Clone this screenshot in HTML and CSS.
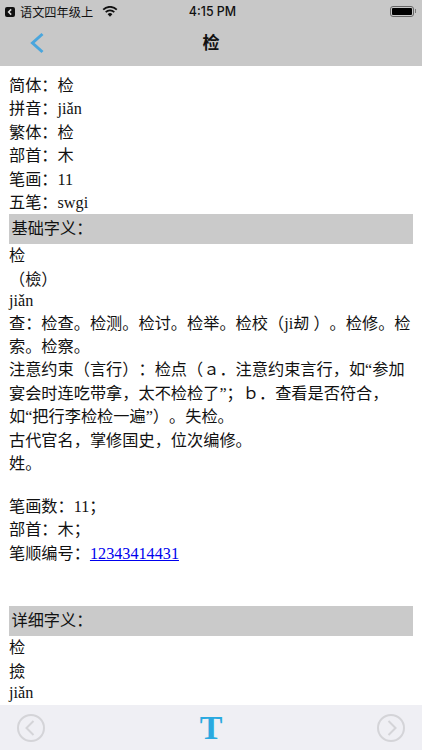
FILE: index.html
```html
<!DOCTYPE html>
<html lang="zh">
<head>
<meta charset="utf-8">
<title>检</title>
<link rel="stylesheet" href="styles.css">
</head>
<body>
<div class="app">
  <header class="top">
    <div class="status">
      <div class="status-left">
        <svg class="back-badge" viewBox="0 0 10 10"><rect width="10" height="10" rx="2" fill="#111"/><path d="M6.2 2.4 3.6 5l2.6 2.6" fill="none" stroke="#ddd" stroke-width="1.5"/></svg>
        <span>语文四年级上</span>
        <svg class="wifi" viewBox="0 0 16 11"><path d="M8 10.8 5.6 8.2a3.4 3.4 0 0 1 4.8 0z" fill="#111"/><path d="M3.7 6.2a6 6 0 0 1 8.6 0M1.2 3.6a9.6 9.6 0 0 1 13.6 0" fill="none" stroke="#111" stroke-width="1.7"/></svg>
      </div>
      <div class="status-time">4:15 PM</div>
      <div class="status-right">
        <span class="battery"><span class="battery-fill"></span></span><span class="battery-cap"></span>
      </div>
    </div>
    <nav class="nav">
      <svg class="nav-back" viewBox="0 0 16 22"><path d="M13.5 2 3.5 11l10 9" fill="none" stroke="#4aa6dd" stroke-width="3"/></svg>
      <h1>检</h1>
    </nav>
  </header>
  <main class="content">
    <div class="line">简体：检</div>
    <div class="line">拼音：jiǎn</div>
    <div class="line">繁体：检</div>
    <div class="line">部首：木</div>
    <div class="line">笔画：11</div>
    <div class="line">五笔：swgi</div>
    <div class="section">基础字义：</div>
    <div class="line">检</div>
    <div class="line">（檢）</div>
    <div class="latin">jiǎn</div>
    <div class="line">查：检查。检测。检讨。检举。检校（ji刼 ）。检修。检索。检察。</div>
    <div class="line">注意约束（言行）：检点（ａ．注意约束言行，如“参加宴会时连吃带拿，太不检检了”；ｂ．查看是否符合，<br>如“把行李检检一遍”）。失检。</div>
    <div class="line">古代官名，掌修国史，位次编修。</div>
    <div class="line">姓。</div>
    <div class="spacer"></div>
    <div class="line">笔画数：11；</div>
    <div class="line">部首：木；</div>
    <div class="line">笔顺编号：<a href="#">12343414431</a></div>
    <div class="spacer double"></div>
    <div class="section">详细字义：</div>
    <div class="line">检</div>
    <div class="line">撿</div>
    <div class="latin">jiǎn</div>
  </main>
  <footer class="bottom">
    <svg class="round" viewBox="0 0 28 28"><circle cx="14" cy="14" r="13" fill="none" stroke="#d4d4d8" stroke-width="2"/><path d="M16.5 7 9.5 14l7 7" fill="none" stroke="#d4d4d8" stroke-width="2"/></svg>
    <span class="font-t">T</span>
    <svg class="round" viewBox="0 0 28 28"><circle cx="14" cy="14" r="13" fill="none" stroke="#d4d4d8" stroke-width="2"/><path d="M11.5 7l7 7-7 7" fill="none" stroke="#d4d4d8" stroke-width="2"/></svg>
  </footer>
</div>
</body>
</html>
```
FILE: styles.css
```css
* { box-sizing: border-box; }
html, body { margin: 0; padding: 0; }
body { width: 422px; height: 750px; overflow: hidden; background: #fff; }
.app { width: 422px; height: 750px; display: flex; flex-direction: column; }
.top { height: 66px; flex: none; background: #c8c8c8; color: #111; font-family: "Liberation Sans", "Noto Sans CJK SC", sans-serif; }
.status { height: 22px; padding: 0 6px 0 5px; display: grid; grid-template-columns: 1fr auto 1fr; align-items: center; font-size: 12.2px; }
.status-left { display: flex; align-items: center; gap: 5px; padding-top: 1px; }
.back-badge { width: 10px; height: 10px; }
.wifi { width: 16px; height: 11px; margin-left: 4px; }
.status-time { font-family: Inter, sans-serif; font-weight: 500; font-size: 12.4px; padding: 1px 0 0 4px; }
.status-right { display: flex; justify-content: flex-end; align-items: center; }
.battery { width: 24px; height: 11px; border: 1px solid #666; border-radius: 3px; padding: 1px; display: block; }
.battery-fill { display: block; height: 100%; background: #000; border-radius: 1px; }
.battery-cap { width: 1px; height: 4px; background: #777; margin-left: 1px; }
.nav { height: 44px; position: relative; display: flex; align-items: center; justify-content: center; }
.nav h1 { margin: 0 0 4px; font-size: 17px; line-height: 24px; font-weight: 700; font-family: "Noto Sans CJK SC", sans-serif; }
.nav-back { position: absolute; left: 29px; top: 10px; width: 16px; height: 22px; }
.content { flex: 1; min-height: 0; overflow: hidden; padding: 8px 9px 0 9px; font-family: "Liberation Serif", "Noto Sans CJK SC", serif; font-size: 16.2px; line-height: 23.4px; color: #111; text-spacing-trim: space-all; }
.line { padding-top: 1px; margin-bottom: -1px; }
.latin { line-height: 20.4px; }
.line a { color: #0000ee; text-decoration: underline; }
.section { background: #cacaca; height: 30px; line-height: 30px; padding-left: 2.5px; }
.spacer { height: 19.4px; }
.spacer.double { height: 41px; }
.bottom { height: 45px; flex: none; background: #efeff4; display: flex; align-items: center; justify-content: space-between; padding: 0 17px; }
.round { width: 28px; height: 28px; }
.font-t { font-family: "Liberation Serif", serif; font-weight: 700; font-size: 34px; line-height: 1; color: #2aa9e0; }
```
